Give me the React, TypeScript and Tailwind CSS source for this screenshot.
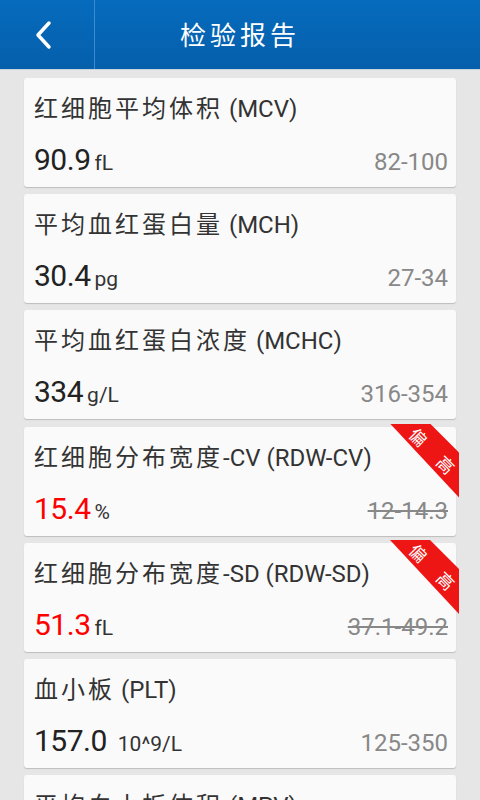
import React from "react";

type Item = {
  title: string;
  value: string;
  unit: string;
  range: string;
  high?: boolean;
};

const items: Item[] = [
  { title: "红细胞平均体积 (MCV)", value: "90.9", unit: "fL", range: "82-100" },
  { title: "平均血红蛋白量 (MCH)", value: "30.4", unit: "pg", range: "27-34" },
  { title: "平均血红蛋白浓度 (MCHC)", value: "334", unit: "g/L", range: "316-354" },
  { title: "红细胞分布宽度-CV (RDW-CV)", value: "15.4", unit: "%", range: "12-14.3", high: true },
  { title: "红细胞分布宽度-SD (RDW-SD)", value: "51.3", unit: "fL", range: "37.1-49.2", high: true },
  { title: "血小板 (PLT)", value: "157.0 ", unit: "10^9/L", range: "125-350" },
  { title: "平均血小板体积 (MPV)", value: "10.2", unit: "fL", range: "9.4-12.5" },
];

const FONT = { fontFamily: 'Roboto, "Noto Sans CJK SC", sans-serif' };

function Title({ text }: { text: string }) {
  const parts = text.match(/[\u4e00-\u9fff]+|[^\u4e00-\u9fff]+/g) || [];
  return (
    <div className="text-[24px] leading-[28px] text-[#333333] whitespace-nowrap">
      {parts.map((p, i) =>
        /[\u4e00-\u9fff]/.test(p) ? (
          <span key={i} className="tracking-[3px]" style={{ fontFamily: '"Noto Sans CJK SC", sans-serif' }}>
            {p}
          </span>
        ) : (
          <span key={i}>{p}</span>
        )
      )}
    </div>
  );
}

function Ribbon() {
  return (
    <div className="absolute top-[-3px] right-[-3px] w-[70px] h-[74px] pointer-events-none">
      <div
        className="absolute inset-0 bg-[#ee1515]"
        style={{ clipPath: "polygon(1px 0, 41px 0, 70px 29px, 70px 74px)" }}
      />
      <div className="absolute left-[44px] top-[26px] w-0 h-0">
        <div
          className="absolute left-[-40px] top-[-12px] w-[80px] h-[24px] flex items-center justify-center gap-[22px] rotate-45 text-white text-[17px] leading-none"
          style={{ fontFamily: '"Noto Sans CJK SC", sans-serif' }}
        >
          <span>偏</span>
          <span>高</span>
        </div>
      </div>
    </div>
  );
}

function Card({ item }: { item: Item }) {
  return (
    <div className="relative h-[109px] bg-[#fafafa] rounded-[3px] shadow-[0_1px_1px_rgba(0,0,0,0.18)] pl-[10px] pr-[8px] pt-[15px] flex flex-col">
      <Title text={item.title} />
      <div className="mt-[22px] flex items-baseline justify-between">
        <div className="flex items-baseline">
          <span
            className={`text-[30px] leading-[30px] whitespace-pre tracking-[-0.5px] ${item.high ? "text-[#ff0000]" : "text-[#222222]"}`}
          >
            {item.value}
          </span>
          <span className="ml-[4px] text-[21px] leading-[30px] text-[#333333]">{item.unit}</span>
        </div>
        <span
          className={`text-[24px] leading-[30px] text-[#888888] ${item.high ? "line-through decoration-[#888888]" : ""}`}
        >
          {item.range}
        </span>
      </div>
      {item.high && <Ribbon />}
    </div>
  );
}

export default function App() {
  return (
    <div className="w-[480px] h-[800px] overflow-hidden bg-[#e6e6e6]" style={FONT}>
      <div className="h-[70px] bg-gradient-to-b from-[#066bbd] to-[#055fab] border-b border-[#c9d3df] flex">
        <div className="w-[95px] h-full flex items-center justify-center border-r border-[#3b8bd2]">
          <svg width="22" height="32" viewBox="0 0 22 32" className="ml-[-6px]">
            <path d="M16 4 L5 16 L16 28" fill="none" stroke="white" strokeWidth="3.5" strokeLinecap="round" strokeLinejoin="round" />
          </svg>
        </div>
        <div className="flex-1 flex items-center justify-center pr-[95px]">
          <span
            className="text-white text-[26px] tracking-[4px] leading-none mt-[-2px]"
            style={{ fontFamily: '"Noto Sans CJK SC", sans-serif' }}
          >
            检验报告
          </span>
        </div>
      </div>
      <div className="px-[24px] pt-[7.7px] flex flex-col gap-[7.3px]">
        {items.map((it, i) => (
          <Card key={i} item={it} />
        ))}
      </div>
    </div>
  );
}
